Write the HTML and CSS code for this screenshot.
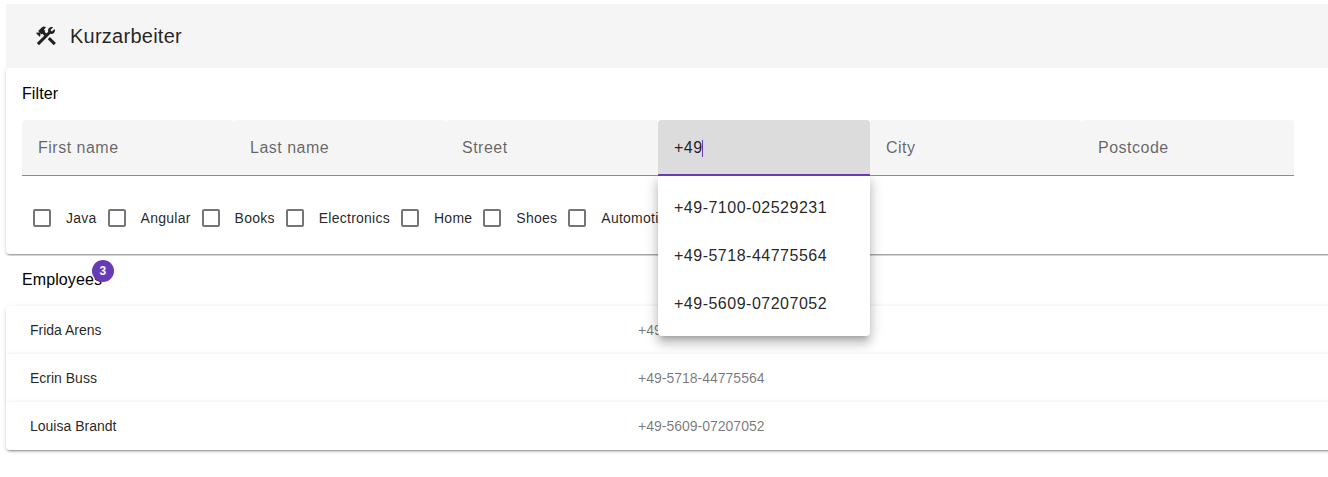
FILE: index.html
```
<!DOCTYPE html>
<html lang="de">
<head>
<meta charset="utf-8">
<title>Kurzarbeiter</title>
<link rel="stylesheet" href="styles.css">
</head>
<body>
<div class="page">
  <header class="toolbar">
    <svg class="logo" viewBox="0 0 24 24"><path d="M13.78 15.17l2.12-2.12 6 6-2.12 2.12z"/><path d="M17.5 10c1.93 0 3.5-1.57 3.5-3.5 0-.58-.16-1.12-.41-1.6l-2.7 2.7-1.49-1.49 2.7-2.7c-.48-.25-1.02-.41-1.6-.41C15.57 3 14 4.57 14 6.5c0 .41.08.8.21 1.16l-1.85 1.85-1.78-1.78.71-.71-1.41-1.41L12 3.49c-1.17-1.17-3.07-1.17-4.24 0L4.22 7.03l1.41 1.41H2.81l-.71.71 3.54 3.54.71-.71V9.15l1.41 1.41.71-.71 1.78 1.78-7.41 7.41 2.12 2.12L16.34 9.79c.36.13.75.21 1.16.21z"/></svg>
    <h1 class="title">Kurzarbeiter</h1>
  </header>
  <section class="card filter">
    <h2 class="heading">Filter</h2>
    <div class="fields">
      <div class="field">First name</div>
      <div class="field">Last name</div>
      <div class="field">Street</div>
      <div class="field active">+49<span class="caret"></span>
        <div class="menu">
          <div class="option">+49-7100-02529231</div>
          <div class="option">+49-5718-44775564</div>
          <div class="option">+49-5609-07207052</div>
        </div>
      </div>
      <div class="field">City</div>
      <div class="field">Postcode</div>
    </div>
    <div class="checks">
      <label class="check"><span class="box"></span>Java</label>
      <label class="check"><span class="box"></span>Angular</label>
      <label class="check"><span class="box"></span>Books</label>
      <label class="check"><span class="box"></span>Electronics</label>
      <label class="check"><span class="box"></span>Home</label>
      <label class="check"><span class="box"></span>Shoes</label>
      <label class="check"><span class="box"></span>Automotive</label>
    </div>
  </section>
  <section class="employees">
    <h2 class="heading employees-heading"><span class="badge-host">Employees<span class="badge">3</span></span></h2>
    <div class="list">
      <div class="card row"><span class="name">Frida Arens</span><span class="phone">+49-7100-02529231</span></div>
      <div class="card row"><span class="name">Ecrin Buss</span><span class="phone">+49-5718-44775564</span></div>
      <div class="card row"><span class="name">Louisa Brandt</span><span class="phone">+49-5609-07207052</span></div>
    </div>
  </section>
</div>
</body>
</html>
```
FILE: styles.css
```
* { box-sizing: border-box; }
html { overflow: hidden; }
body {
  margin: 0;
  background: #fff;
  color: rgba(0, 0, 0, 0.87);
  font-family: "Liberation Sans", Arial, sans-serif;
  font-size: 14px;
}
.page { width: 1342px; min-height: 477px; padding: 4px 0 0 6px; }
.toolbar {
  position: relative;
  z-index: 1;
  display: flex;
  align-items: center;
  gap: 12px;
  height: 64px;
  padding-left: 28px;
  background: #f5f5f5;
}
.logo { width: 24px; height: 24px; fill: #212121; }
.title { margin: 0; font-size: 20px; font-weight: 400; letter-spacing: 0.25px; }
.card {
  background: #fff;
  box-shadow: 0 3px 1px -2px rgba(0, 0, 0, 0.2), 0 2px 2px 0 rgba(0, 0, 0, 0.14), 0 1px 5px 0 rgba(0, 0, 0, 0.12);
}
.filter {
  height: 186px;
  padding: 14px 16px 0;
  border-radius: 4px;
}
.heading {
  margin: 0;
  color: #000;
  font-size: 16px;
  font-weight: 400;
  letter-spacing: 0.1px;
  line-height: 24px;
}
.fields { display: flex; width: 1272px; margin-top: 14px; }
.field {
  position: relative;
  display: flex;
  align-items: center;
  flex: 1;
  height: 56px;
  padding: 1px 16px 0;
  border-bottom: 1px solid #8c8c8c;
  border-radius: 4px 4px 0 0;
  background: #f5f5f5;
  color: rgba(0, 0, 0, 0.6);
  font-size: 16px;
  letter-spacing: 0.5px;
}
.active {
  z-index: 2;
  padding-top: 2px;
  border-bottom: 2px solid #673ab7;
  background: #dcdcdc;
  color: rgba(0, 0, 0, 0.87);
}
.caret { width: 1px; height: 17px; margin-left: -1px; background: #673ab7; }
.menu {
  position: absolute;
  top: 56px;
  left: 0;
  width: 100%;
  padding: 8px 0;
  border-radius: 0 0 4px 4px;
  background: #fff;
  box-shadow: 0 5px 5px -3px rgba(0, 0, 0, 0.2), 0 8px 10px 1px rgba(0, 0, 0, 0.14), 0 3px 14px 2px rgba(0, 0, 0, 0.12);
  clip-path: inset(0 -30px -30px -30px);
}
.option { height: 48px; padding: 0 16px; line-height: 47px; }
.checks { display: flex; margin-top: 22px; }
.check {
  display: flex;
  align-items: center;
  height: 40px;
  color: rgba(0, 0, 0, 0.87);
  letter-spacing: 0.25px;
}
.box {
  width: 18px;
  height: 18px;
  margin: 0 15px 0 11px;
  border: 2px solid #757575;
  border-radius: 2px;
}
.employees { position: relative; margin-top: 2px; background: #fff; }
.employees-heading { height: 50px; padding: 12px 16px 0; }
.badge-host { position: relative; }
.badge {
  position: absolute;
  top: -11px;
  left: 70px;
  width: 22px;
  height: 22px;
  border-radius: 50%;
  background: #673ab7;
  color: #fff;
  font-size: 12px;
  font-weight: 700;
  line-height: 22px;
  text-align: center;
}
.row {
  display: flex;
  align-items: center;
  height: 48px;
  padding: 0 24px;
}
.row:first-child { border-radius: 4px 4px 0 0; }
.row:last-child { border-radius: 0 0 4px 4px; }
.name { width: 608px; }
.phone { color: rgba(0, 0, 0, 0.54); }
```
